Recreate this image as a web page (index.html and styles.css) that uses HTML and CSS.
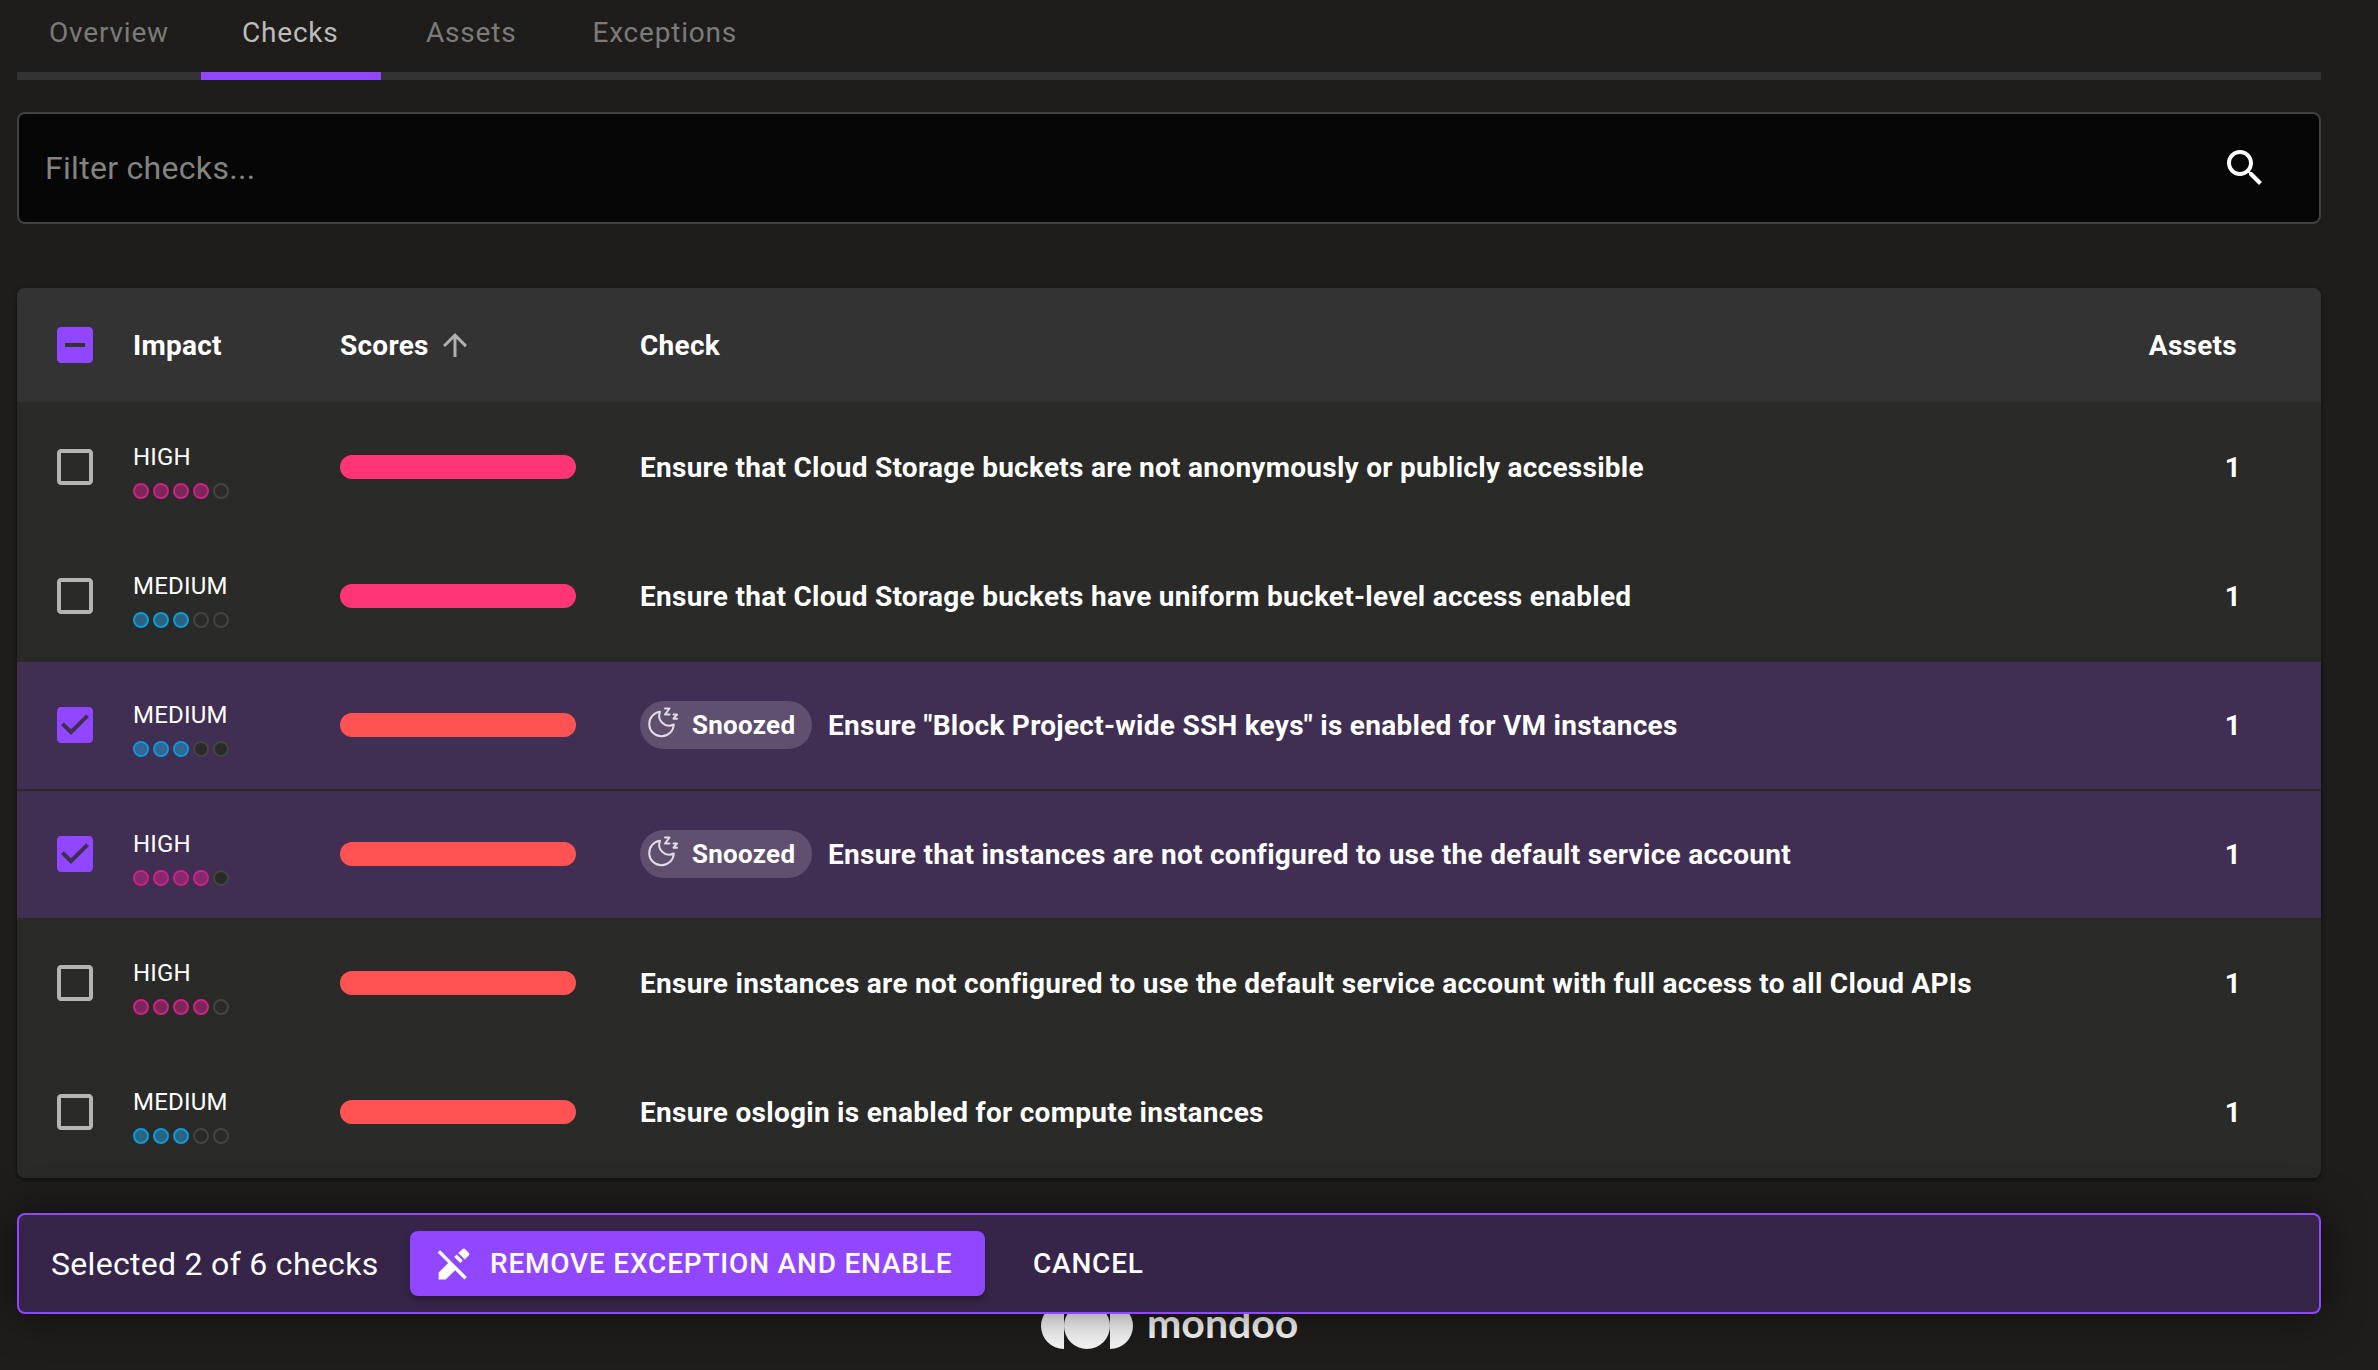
FILE: index.html
```
<!DOCTYPE html>
<html lang="en">
<head>
<meta charset="utf-8">
<title>Checks</title>
<link rel="stylesheet" href="styles.css">
</head>
<body>
<svg class="sprite" aria-hidden="true">
  <symbol id="box" viewBox="0 0 24 24"><path d="M19 5v14H5V5h14m0-2H5c-1.1 0-2 .9-2 2v14c0 1.1.9 2 2 2h14c1.1 0 2-.9 2-2V5c0-1.1-.9-2-2-2z"/></symbol>
  <symbol id="box-checked" viewBox="0 0 24 24"><path d="M19 3H5c-1.11 0-2 .9-2 2v14c0 1.1.89 2 2 2h14c1.11 0 2-.9 2-2V5c0-1.1-.89-2-2-2zm-9 14l-5-5 1.41-1.41L10 14.17l7.59-7.59L19 8l-9 9z"/></symbol>
  <symbol id="box-some" viewBox="0 0 24 24"><path d="M19 3H5c-1.1 0-2 .9-2 2v14c0 1.1.9 2 2 2h14c1.1 0 2-.9 2-2V5c0-1.1-.9-2-2-2zm-2 10H7v-2h10v2z"/></symbol>
  <symbol id="snooze" viewBox="0 0 36 36"><g fill="none" stroke="currentColor" stroke-width="2" stroke-linejoin="round" stroke-linecap="round"><path d="M14 4.800A12.300 12.300 0 1 0 27.800 17.500A10 10 0 0 1 14 4.800Z"/><path d="M19 1.500h4.500l-4.500 6h4.500"/><path d="M27.500 7.500h3.500l-3.500 4.200h3.500"/></g></symbol>
</svg>
<main class="page">
  <nav class="tabs">
    <a class="tab">Overview</a>
    <a class="tab tab--active">Checks</a>
    <a class="tab">Assets</a>
    <a class="tab">Exceptions</a>
  </nav>

  <div class="search">
    <span class="search__hint">Filter checks...</span>
    <svg class="search__icon" viewBox="0 0 24 24"><path d="M15.500 14h-.79l-.28-.27C15.410 12.590 16 11.110 16 9.500 16 5.910 13.090 3 9.500 3S3 5.910 3 9.500 5.910 16 9.500 16c1.610 0 3.090-.59 4.230-1.570l.27.28v.79l5 4.990L20.490 19l-4.990-5zm-6 0C7.010 14 5 11.990 5 9.500S7.010 5 9.500 5 14 7.010 14 9.500 11.990 14 9.500 14z"/></svg>
  </div>

  <section class="table">
    <div class="row row--head">
      <svg class="check check--on"><use href="#box-some"/></svg>
      <span>Impact</span>
      <span class="sort">Scores <svg class="sort__icon" viewBox="0 0 24 24"><path d="M4 12l1.410 1.410L11 7.830V20h2V7.830l5.580 5.590L20 12l-8-8-8 8z"/></svg></span>
      <span>Check</span>
      <span class="count count--head">Assets</span>
    </div>
    <div class="row">
      <svg class="check"><use href="#box"/></svg>
      <div class="impact impact--high"><span>HIGH</span><div class="dots"><i class="on"></i><i class="on"></i><i class="on"></i><i class="on"></i><i></i></div></div>
      <div class="bar bar--critical"></div>
      <div class="title">Ensure that Cloud Storage buckets are not anonymously or publicly accessible</div>
      <span class="count">1</span>
    </div>
    <div class="row">
      <svg class="check"><use href="#box"/></svg>
      <div class="impact impact--medium"><span>MEDIUM</span><div class="dots"><i class="on"></i><i class="on"></i><i class="on"></i><i></i><i></i></div></div>
      <div class="bar bar--critical"></div>
      <div class="title">Ensure that Cloud Storage buckets have uniform bucket-level access enabled</div>
      <span class="count">1</span>
    </div>
    <div class="row row--selected">
      <svg class="check check--on"><use href="#box-checked"/></svg>
      <div class="impact impact--medium"><span>MEDIUM</span><div class="dots"><i class="on"></i><i class="on"></i><i class="on"></i><i></i><i></i></div></div>
      <div class="bar bar--high"></div>
      <div class="title"><span class="badge"><svg class="badge__icon"><use href="#snooze"/></svg>Snoozed</span>Ensure "Block Project-wide SSH keys" is enabled for VM instances</div>
      <span class="count">1</span>
    </div>
    <div class="row row--selected">
      <svg class="check check--on"><use href="#box-checked"/></svg>
      <div class="impact impact--high"><span>HIGH</span><div class="dots"><i class="on"></i><i class="on"></i><i class="on"></i><i class="on"></i><i></i></div></div>
      <div class="bar bar--high"></div>
      <div class="title"><span class="badge"><svg class="badge__icon"><use href="#snooze"/></svg>Snoozed</span>Ensure that instances are not configured to use the default service account</div>
      <span class="count">1</span>
    </div>
    <div class="row">
      <svg class="check"><use href="#box"/></svg>
      <div class="impact impact--high"><span>HIGH</span><div class="dots"><i class="on"></i><i class="on"></i><i class="on"></i><i class="on"></i><i></i></div></div>
      <div class="bar bar--high"></div>
      <div class="title">Ensure instances are not configured to use the default service account with full access to all Cloud APIs</div>
      <span class="count">1</span>
    </div>
    <div class="row">
      <svg class="check"><use href="#box"/></svg>
      <div class="impact impact--medium"><span>MEDIUM</span><div class="dots"><i class="on"></i><i class="on"></i><i class="on"></i><i></i><i></i></div></div>
      <div class="bar bar--high"></div>
      <div class="title">Ensure oslogin is enabled for compute instances</div>
      <span class="count">1</span>
    </div>
  </section>

  <div class="actions">
    <span class="actions__label">Selected 2 of 6 checks</span>
    <button class="btn btn--primary"><svg class="btn__icon" viewBox="0 0 24 24"><path d="M2.810 5.170L4.250 3.720 20.300 19.800l-1.450 1.440-5.550-5.560L7.600 21.300H3.400v-4.200l5.700-5.650z"/><path d="M12.750 7.750l1.450-1.450 3.650 3.650-1.450 1.450zM15.150 5.350l2.700-2.350a1 1 0 0 1 1.350 0l2.350 2.350a1 1 0 0 1 0 1.400l-2.500 2.500z"/></svg>REMOVE EXCEPTION AND ENABLE</button>
    <button class="btn">CANCEL</button>
  </div>

  <footer class="brand">
    <svg class="brand__mark" viewBox="0 0 92 46"><path d="M23 0v46a23 23 0 0 1 0-46zM69 0a23 23 0 0 1 0 46z"/><circle cx="46" cy="23" r="23"/></svg>
    <span class="brand__name">mondoo</span>
  </footer>
</main>
</body>
</html>
```
FILE: styles.css
```
* { box-sizing: border-box; }

body {
  margin: 0;
  height: 1370px;
  overflow: hidden;
  background: #1e1d1b;
  color: #fff;
  font-family: Roboto, "Liberation Sans", sans-serif;
  font-size: 28px;
}

.sprite { display: none; }

.page {
  display: flex;
  flex-direction: column;
  width: 2304px;
  margin-left: 17px;
}

.tabs {
  display: flex;
  height: 80px;
  border-bottom: 8px solid #333;
}

.tab {
  height: 80px;
  padding: 12px 32px 0;
  line-height: 42px;
  letter-spacing: 0.8px;
  color: #7b7b7a;
}
.tab:first-child { width: 184px; }
.tab:nth-child(3) { padding-left: 45px; }
.tab:nth-child(4) { padding-left: 44px; }
.tab--active {
  width: 180px;
  padding-left: 41px;
  color: #bbb;
  border-bottom: 8px solid #9147ff;
}

.search {
  display: flex;
  align-items: center;
  justify-content: space-between;
  height: 112px;
  margin-top: 32px;
  padding: 0 50px 0 26px;
  border: 2px solid #40403f;
  border-radius: 8px;
  background: #060606;
}
.search__hint {
  color: #838381;
  font-size: 32px;
  letter-spacing: 0.3px;
}
.search__icon { width: 48px; height: 48px; fill: #fff; }

.table {
  margin-top: 64px;
  border-radius: 8px;
  background: #2a2a28;
  overflow: hidden;
  box-shadow: 0 2px 4px rgba(0, 0, 0, 0.5);
}

.row {
  display: grid;
  grid-template-columns: 82px 207px 300px 1fr 100px;
  align-items: center;
  height: 129px;
  padding: 0 80px 1px 34px;
  border-bottom: 2px solid #2a2a28;
  font-weight: 700;
  letter-spacing: 0.27px;
}
.row--head { height: 116px; padding-bottom: 0; background: #333; }
.row--selected { background: #402f53; }

.check { width: 48px; height: 48px; fill: #b4b4b3; }
.check--on { fill: #9147ff; }

.sort { display: flex; align-items: center; gap: 8px; }
.sort__icon { width: 36px; height: 36px; fill: #b0b0b0; }

.impact {
  display: flex;
  flex-direction: column;
  gap: 12px;
  padding-top: 8px;
  font-size: 24px;
  font-weight: 400;
  line-height: 28px;
  letter-spacing: 0.2px;
}
.dots { display: flex; gap: 4px; }
.dots i {
  width: 16px;
  height: 16px;
  border: 2px solid #444443;
  border-radius: 50%;
  background: #2a2a28;
}
.impact--high .on { border-color: #cb2386; background: rgba(203, 35, 134, 0.52); }
.impact--medium .on { border-color: #1099d8; background: rgba(40, 150, 205, 0.55); }

.row--selected .impact--high .on,
.row--selected .impact--medium .on { background-clip: padding-box; }

.bar { width: 236px; height: 24px; border-radius: 12px; }
.bar--critical { background: #ff3577; }
.bar--high { background: #ff5353; }

.title { display: flex; align-items: center; gap: 16px; white-space: nowrap; }
.badge {
  display: flex;
  align-items: center;
  gap: 10px;
  width: 172px;
  height: 48px;
  padding-left: 6px;
  border-radius: 24px;
  background: #5f506f;
  font-size: 26px;
}
.badge__icon { width: 36px; height: 36px; color: #e0dde3; }

.count { text-align: right; }
.count--head { padding-right: 4px; }

.actions {
  position: relative;
  display: flex;
  align-items: center;
  height: 101px;
  margin-top: 35px;
  padding-left: 32px;
  border: 2px solid #9147ff;
  border-radius: 8px;
  background: #362549;
  box-shadow: 0 0 40px rgba(0, 0, 0, 0.5);
}
.actions__label { width: 359px; font-size: 32px; letter-spacing: 0.3px; }

.btn {
  display: flex;
  align-items: center;
  height: 65px;
  padding: 0 48px;
  border: 0;
  border-radius: 8px;
  background: none;
  color: #fff;
  font: 500 28px Roboto, sans-serif;
  letter-spacing: 0.8px;
  white-space: nowrap;
}
.btn--primary {
  width: 575px;
  padding: 0 24px 0 23px;
  background: #9147ff;
  box-shadow: 0 4px 6px rgba(0, 0, 0, 0.3);
}
.btn__icon { width: 40px; height: 40px; margin-right: 17px; fill: #fff; }

.brand {
  display: flex;
  margin: -11px 0 0 1024px;
  color: #f5f5f5;
}
.brand__mark { width: 92px; height: 46px; fill: #f5f5f5; }
.brand__name {
  margin-left: 14px;
  font: 700 41px/40px Lato, sans-serif;
}
```
